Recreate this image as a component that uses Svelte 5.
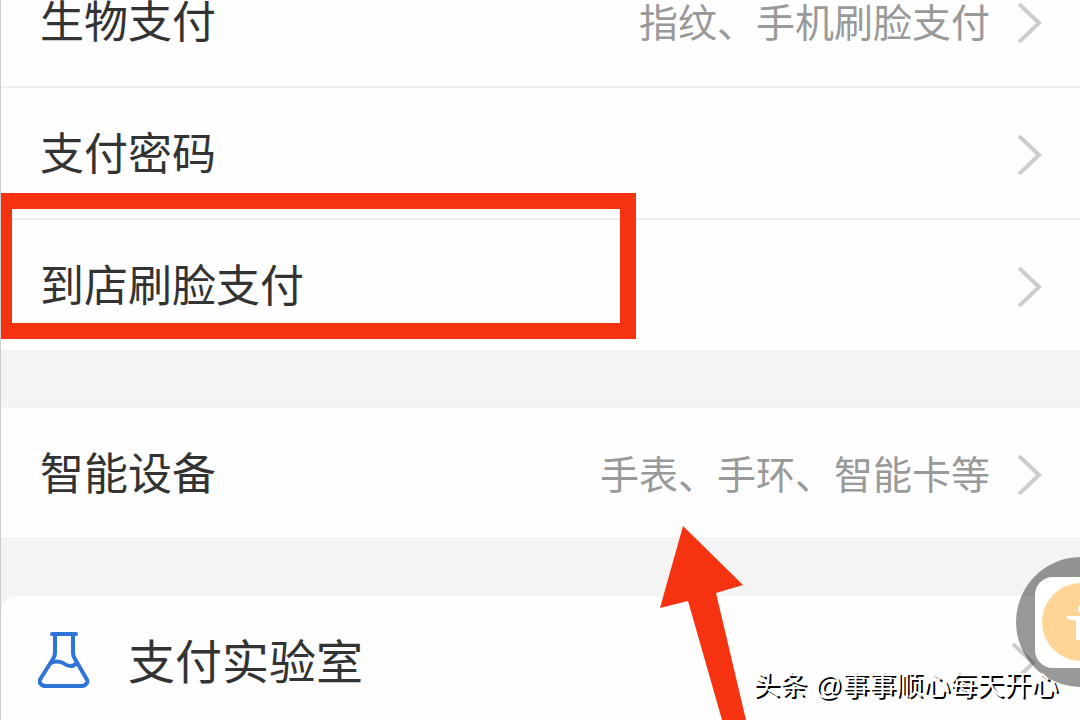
<script>
  const groups = [
    [
      { title: '生物支付', value: '指纹、手机刷脸支付' },
      { title: '支付密码' },
      { title: '到店刷脸支付', marked: true }
    ],
    [{ title: '智能设备', value: '手表、手环、智能卡等' }],
    [{ title: '支付实验室', icon: true }]
  ];
</script>

<main class="settings">
  {#each groups as group}
    <ul class="group" class:rounded={group[0].icon}>
      {#each group as item}
        <li class="item">
          <a class="row" class:large={item.icon} href="#{item.title}">
            {#if item.icon}
              <svg class="flask" viewBox="0 0 52 56" aria-hidden="true">
                <path d="M14 2H38M17 2V21Q17 24 15 27L3 46Q0 50 3 52Q4 54 8 54H43Q47 54 48 52Q51 50 48 46L37 27Q35 24 35 21V2" />
                <path d="M13 31Q19 28 25 31Q33 37 39 31" />
              </svg>
            {/if}
            <span class="title">{item.title}</span>
            {#if item.value}
              <span class="value">{item.value}</span>
            {/if}
            <svg class="chevron" viewBox="0 0 24 40" aria-hidden="true">
              <path d="M1 1L21 20L1 39" />
            </svg>
          </a>
          {#if item.marked}
            <div class="marker"></div>
          {/if}
        </li>
      {/each}
    </ul>
  {/each}

  <svg class="arrow" viewBox="0 0 86 194" aria-hidden="true">
    <path d="M23 0L83 59L56 67L86 194H62L28 75L0 82Z" />
  </svg>

  <button class="assist" aria-label="辅助功能">
    <svg viewBox="0 0 130 130" aria-hidden="true">
      <circle cx="65" cy="65" r="65" fill="#000" fill-opacity="0.4" />
      <rect x="19" y="20" width="92" height="91" rx="18" fill="#fff" />
      <circle cx="65" cy="65" r="39" fill="#ffd596" />
      <circle cx="67" cy="52" r="5" fill="#fff" />
      <path d="M51 59H83V62L75 64V83H71V73H64V83H60V64L51 62Z" fill="#fff" />
    </svg>
  </button>

  <p class="credit">头条 @事事顺心每天开心</p>
</main>

<style>
  :global(body) {
    margin: 0;
    background: #f4f4f4;
  }
  .settings {
    position: relative;
    height: 100vh;
    overflow: hidden;
    box-sizing: border-box;
    border-left: 1px solid #cdcdcd;
    background: #f4f4f4;
    font-family: "Noto Sans CJK SC", sans-serif;
    color: #333;
  }
  .group {
    margin: 0 0 58px;
    padding: 0;
    list-style: none;
    background: #fefefe;
    box-shadow: 0 0 0 1px #efefef;
  }
  /* the list is scrolled, its first row is partly out of view */
  .group:first-child {
    margin-top: -44px;
  }
  .rounded {
    border-radius: 16px 16px 0 0;
    box-shadow: none;
  }
  .item {
    position: relative;
    border-bottom: 2px solid #efefef;
  }
  .item:last-child {
    border-bottom: 0;
  }
  .row {
    display: flex;
    align-items: center;
    box-sizing: border-box;
    height: 130px;
    padding: 4px 38px 0 39px;
    color: inherit;
    text-decoration: none;
  }
  .title {
    flex: 1;
    padding-bottom: 8px;
    font-size: 44px;
    line-height: 64px;
    white-space: nowrap;
  }
  .large {
    padding-right: 44px;
  }
  .large .title {
    font-size: 47px;
  }
  .value {
    margin-right: 28px;
    padding-bottom: 6px;
    font-size: 39px;
    line-height: 64px;
    color: #999;
    white-space: nowrap;
  }
  .chevron {
    flex: none;
    width: 24px;
    height: 40px;
    fill: none;
    stroke: #ccc;
    stroke-width: 4;
  }
  .flask {
    flex: none;
    width: 52px;
    height: 56px;
    margin: 0 38px 6px -2px;
    fill: none;
    stroke: #2f74d8;
    stroke-width: 4;
    stroke-linecap: round;
    stroke-linejoin: round;
  }
  .marker {
    position: absolute;
    top: -27px;
    left: -5px;
    width: 608px;
    height: 114px;
    border: 16px solid #f53311;
    pointer-events: none;
  }
  .arrow {
    position: absolute;
    top: 526px;
    left: 659px;
    width: 86px;
    height: 194px;
    fill: #f53311;
  }
  .assist {
    position: absolute;
    top: 557px;
    right: -66px;
    width: 130px;
    height: 130px;
    padding: 0;
    border: 0;
    border-radius: 50%;
    background: none;
  }
  .assist svg {
    display: block;
  }
  .credit {
    position: absolute;
    right: 22px;
    bottom: 14px;
    margin: 0;
    font-family: "Liberation Sans", "Noto Sans CJK SC", sans-serif;
    font-size: 27px;
    line-height: 40px;
    color: #fff;
    text-shadow: 2px 2px 0 #000;
    white-space: nowrap;
  }
</style>
